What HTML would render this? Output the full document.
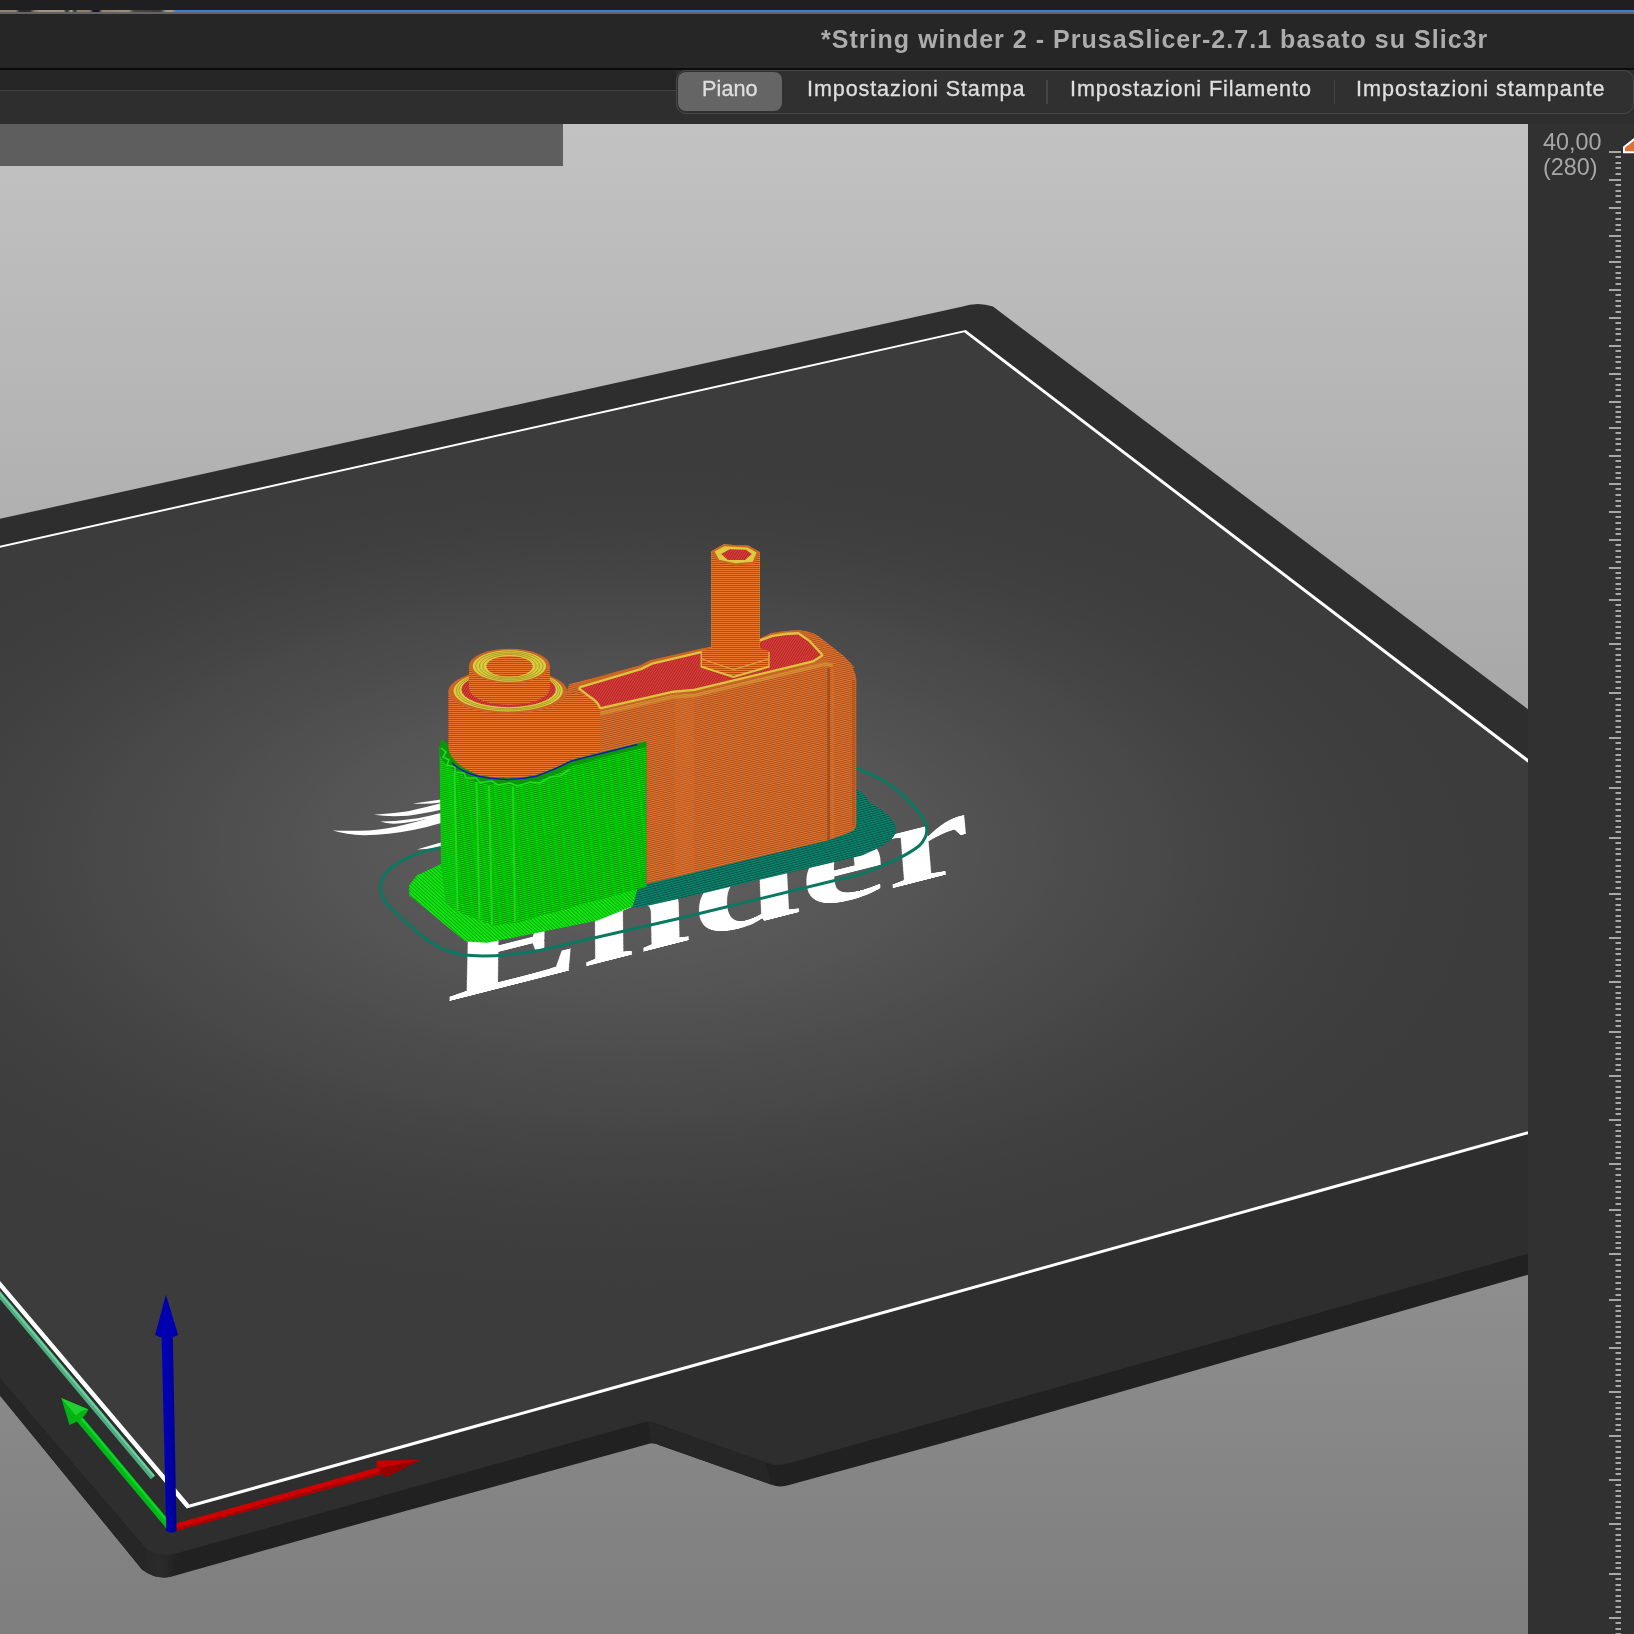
<!DOCTYPE html>
<html lang="it">
<head>
<meta charset="utf-8">
<title>String winder 2 - PrusaSlicer</title>
<style>
html,body{margin:0;padding:0;background:#262626;}
body{width:1634px;height:1634px;overflow:hidden;position:relative;font-family:"Liberation Sans",sans-serif;}
#topstrip{position:absolute;left:0;top:0;width:1634px;height:10px;background:#1f1f21;}
#blueline{position:absolute;left:175px;top:9.8px;width:1459px;height:1.9px;background:#3f7bd1;}
#tanline{position:absolute;left:0;top:9.8px;width:176px;height:1.9px;background:linear-gradient(90deg,#8f8570 0,#8f8570 9%,#2c2b28 11%,#2c2b28 17%,#7a705d 19%,#a09580 22%,#a09580 36%,#2a2a2a 38%,#b0a58c 40.5%,#2a2a2a 42.5%,#8a806a 44%,#8a806a 51%,#14142a 53%,#14142a 56%,#8f8570 58%,#9a8f78 73%,#4a463e 76%,#3e3b35 91%,#a59a82 94.5%,#a59a82 97.5%,#3f7bd1 100%);}
#grayline{position:absolute;left:0;top:11.7px;width:1634px;height:2.4px;background:#636363;}
#titlebar{position:absolute;left:0;top:14px;width:1634px;height:54px;background:#262626;}
#title{will-change:transform;position:absolute;left:821px;top:24.2px;white-space:nowrap;font-weight:bold;font-size:25px;line-height:30px;color:#acacac;letter-spacing:1.03px;}
#blackline{position:absolute;left:0;top:67.5px;width:1634px;height:2px;background:#0c0c0c;}
#tabrow{position:absolute;left:0;top:69.5px;width:1634px;height:54.5px;background:#2e2e2e;}
#tabrowtop{position:absolute;left:0;top:0;width:676px;height:20.5px;background:#262626;border-bottom:1.6px solid #414141;}
#tabs{position:absolute;left:676px;top:0px;width:958px;height:44.5px;box-sizing:border-box;border:1.5px solid #474747;border-radius:10px;background:#303030;}
#tabsel{position:absolute;left:0.8px;top:1.2px;width:104.5px;height:39px;border-radius:8px;background:#656565;}
.tab{will-change:transform;position:absolute;top:4.6px;-webkit-text-stroke:0.35px #dedede;white-space:nowrap;font-size:21.6px;line-height:28px;color:#dedede;}
.sep{position:absolute;top:9.5px;width:1.5px;height:24px;background:#454545;}
#view{position:absolute;left:0;top:124px;width:1528px;height:1510px;overflow:hidden;background:linear-gradient(180deg,#c2c2c2 0,#7e7e7e 100%);}
#graybar{position:absolute;left:0;top:0;width:563px;height:41.5px;background:#5e5e5e;}
#bedwrap{position:absolute;left:0;top:-124px;width:0;height:0;}
#bed{position:absolute;left:0;top:0;width:2500px;height:2500px;transform-origin:0 0;transform:matrix3d(0.629375336,-0.1216651697,0,3.458584042e-05,0.2725061484,0.2352803861,0,-6.752048713e-05,0,0,1,0,-525,664,0,1);
 background:radial-gradient(circle 1250px at 50% 50%,rgb(93,93,93) 0.0%,rgb(93,93,93) 5.0%,rgb(92,92,92) 10.0%,rgb(91,91,91) 15.0%,rgb(90,90,90) 20.0%,rgb(88,88,88) 25.0%,rgb(86,86,86) 30.0%,rgb(84,84,84) 35.0%,rgb(81,81,81) 40.0%,rgb(79,79,79) 45.0%,rgb(76,76,76) 50.0%,rgb(74,74,74) 55.0%,rgb(72,72,72) 60.0%,rgb(69,69,69) 65.0%,rgb(67,67,67) 70.0%,rgb(65,65,65) 75.0%,rgb(63,63,63) 80.0%,rgb(62,62,62) 85.0%,rgb(61,61,61) 90.0%,rgb(60,60,60) 95.0%,rgb(60,60,60) 100.0%);}
#bed .txt{position:absolute;left:329px;top:0;font-family:"Liberation Serif",serif;font-weight:bold;color:#fff;white-space:nowrap;transform-origin:0 0;}
svg{position:absolute;left:0;top:0;}
#side{position:absolute;left:1528px;top:124px;width:106px;height:1510px;background:#313131;}
#rlabel{will-change:transform;position:absolute;left:1542.5px;top:130.4px;font-size:23.4px;line-height:25.3px;color:#a6a6a6;white-space:nowrap;}
</style>
</head>
<body>
<div id="topstrip"></div>
<div id="tanline"></div>
<div id="blueline"></div>
<div id="grayline"></div>
<div id="titlebar"></div>
<div id="title">*String winder 2 - PrusaSlicer-2.7.1 basato su Slic3r</div>
<div id="blackline"></div>
<div id="tabrow">
  <div id="tabrowtop"></div>
  <div id="tabs">
    <div id="tabsel"></div>
    <div class="tab" id="t1" style="left:24.5px;letter-spacing:0.1px">Piano</div>
    <div class="tab" id="t2" style="left:129.5px;letter-spacing:0.88px">Impostazioni Stampa</div>
    <div class="sep" style="left:369px"></div>
    <div class="tab" id="t3" style="left:393px;letter-spacing:0.9px">Impostazioni Filamento</div>
    <div class="sep" style="left:656.5px"></div>
    <div class="tab" id="t4" style="left:679px;letter-spacing:0.98px">Impostazioni stampante</div>
  </div>
</div>

<div id="view">
  <svg id="under" width="1528" height="1510" viewBox="0 124 1528 1510">
    <defs>
  <linearGradient id="cornerg" x1="0" y1="0" x2="1" y2="0">
    <stop offset="0" stop-color="#272727"/><stop offset="0.5" stop-color="#2b2b2b"/><stop offset="1" stop-color="#212121"/>
  </linearGradient>
</defs>
<!-- side faces of the bed -->
<path d="M-10 1383 L142 1569.4 Q156 1580 171 1576.7 L380 1517.9 L650 1443.6 Q655 1442.6 659 1445 L771 1484.5 Q780 1488 789 1485 L940 1443.8 L1540 1271.3 L1540 1240 L-10 1360 Z" fill="#212121"/>
<path d="M-10 1366.5 L-10 1383.6 L142 1569.4 L147 1549.8 Z" fill="#262626"/>
<path d="M147 1549.8 L142 1569.4 Q156 1580 171 1576.7 L178 1553 Q160 1558 147 1549.8 Z" fill="url(#cornerg)"/>
<path d="M648 1421.3 L651.7 1443.3 Q655 1442.6 659 1445 L771 1484.5 L766 1462.4 Z" fill="#262626"/>
<!-- top face rim -->
<path d="M-10 521 L961.6 306.8 Q978 301.5 993 306.6 L1540 718.3 L1540 1250.2 L940 1420.5 L789 1463.2 Q779 1466.5 769 1463.4 L657 1424 Q652 1420.6 645 1422.1 L380 1496.6 L178 1553 Q160 1558 147 1549.8 L-10 1366.5 Z" fill="#2e2e2e"/>

  </svg>
  <div id="bedwrap"><div id="bed"><svg width="2500" height="2500" viewBox="0 0 1000 1000" style="position:absolute;left:0;top:0">
  <g transform="translate(329,616) skewX(-27) scale(1.04,1.0)">
    <text x="0" y="0" font-family="'Liberation Serif',serif" font-weight="bold" font-size="118" fill="#ffffff">Ender</text>
  </g>
</svg>
</div></div>
  <svg id="over" width="1528" height="1510" viewBox="0 124 1528 1510">
    <defs>
  <linearGradient id="gshaft" x1="0" y1="0" x2="1" y2="0">
    <stop offset="0" stop-color="#0000c8"/><stop offset="0.5" stop-color="#0000a8"/><stop offset="1" stop-color="#00008c"/>
  </linearGradient>
</defs>
<!-- printable area outline -->
<path d="M-527.87 663.56 L965.77 330.03 L1888.31 1033.62 L186.68 1508.50 Z M-522.12 664.44 L964.23 332.37 L1881.49 1032.58 L189.32 1504.50 Z" fill="#ffffff" fill-rule="evenodd"/>
<defs>
  <pattern id="layO" width="8" height="2" patternUnits="userSpaceOnUse" patternTransform="rotate(-13.2)">
    <rect width="8" height="2" fill="#ec7831"/><rect y="1.05" width="8" height="0.95" fill="#9e4d1b"/>
  </pattern>
  <pattern id="layO2" width="8" height="2" patternUnits="userSpaceOnUse">
    <rect width="8" height="2" fill="#ea7730"/><rect y="1" width="8" height="1" fill="#a5511d"/>
  </pattern>
  <pattern id="layG" width="8" height="2" patternUnits="userSpaceOnUse" patternTransform="rotate(-12.8)">
    <rect width="8" height="2" fill="#04ea04"/><rect y="1.05" width="8" height="0.95" fill="#038603"/>
  </pattern>
  <pattern id="layR" width="2.1" height="8" patternUnits="userSpaceOnUse" patternTransform="rotate(32)">
    <rect width="2.1" height="8" fill="#e43c39"/><rect x="1.15" width="0.95" height="8" fill="#a62a28"/>
  </pattern>
  <pattern id="layRaft" width="2.6" height="8" patternUnits="userSpaceOnUse" patternTransform="rotate(-48)">
    <rect width="2.6" height="8" fill="#12ee12"/><rect x="1.6" width="1" height="8" fill="#09a409"/>
  </pattern>
  <pattern id="layT" width="8" height="2.2" patternUnits="userSpaceOnUse" patternTransform="rotate(-14)">
    <rect width="8" height="2.2" fill="#0d8a72"/><rect y="1.2" width="8" height="1" fill="#065244"/>
  </pattern>
</defs>
<!-- dragon logo (white swooshes) -->
<g fill="#ffffff">
  <path d="M332.7 830.4 Q350 831.3 369 830.4 Q389 828.6 403.3 825 Q416 822 426.8 818.7 Q408 823 393.5 823.8 Q386 823.5 380.2 821.6 Q398 821.2 418 818.2 Q430 815.8 441 813 L441 823 Q426 827.6 413 830 Q389 834.8 364.1 835.3 Q346 834.5 332.7 830.4 Z"/>
  <path d="M373.9 814.8 Q390 814 408.1 811.3 Q428 806.6 441 803.3 L441 809.8 Q428 813 408.1 815.7 Q389 817 373.9 814.8 Z"/>
  <path d="M413 803.6 Q428 801.2 441 799.4 L441 802.6 Q428 804.4 413 803.6 Z"/>
  <path d="M417 849.6 Q430 845.5 441 842.5 L441 847.8 Q430 849 417 849.6 Z"/>
</g>
<!-- skirt loop -->
<path d="M441 847.6 Q412.5 852.5 392 867 Q379 878 380.6 890 Q382 900 392 909.5 L422 936 Q440 950.5 462 954.8 Q492 958.5 540.3 950.2 L680 918.3 L860.3 874.2 Q903 859 919.5 845.5 Q930 834.5 925.5 823.5 Q918 808 898 790.5 Q880 776.5 853 766.8" fill="none" stroke="#0b7862" stroke-width="3"/>
<!-- brim -->
<path d="M610 906 L640 878 L854 787 Q866 794.5 869.5 802.5 L877 806.8 Q890 815 896 826 Q898 836.5 885 844.2 Q875 850 862 855.6 L700 894 L640 907.6 Z" fill="url(#layT)"/>
<!-- raft under the supports -->
<path d="M409.2 885.2 L416.9 875.3 L441 864 L640 880 L632.8 906.2 L597.6 920.5 L487.4 942.8 L465.4 941.6 L409.2 895.3 Z" fill="url(#layRaft)"/>
<!-- support block -->
<path d="M439.5 746 L449 745 L646.5 741 L646.5 886.7 L517 922.5 L494 925.7 L460.5 913 L446 903.4 L441 864 Z" fill="url(#layG)"/>
<path d="M439.5 746 L449 745 L456 768 L456 910 L446 903.4 L441 864 Z" fill="#1cd41c" opacity="0.3"/>
<g stroke="#22e022" stroke-width="2" fill="none" opacity="0.8">
  <path d="M454.5 773 L457.5 910"/><path d="M476.5 782 L479.5 919"/><path d="M489 786 L492 924"/><path d="M513 787 L515 922"/>
</g>
<!-- support interface zigzag -->
<path d="M439.5 746 L441.5 739 L449 745 Q451 764 478.6 775.1 Q507 781.5 535.9 775.1 Q556 768 571.2 759.7 L637.3 743.2 L646.5 741.5 L646.5 746.5 L574 765 Q556 775.5 536 781.5 Q507 788 477 781.5 Q448 771.5 439.5 755 Z" fill="#0b960b"/>
<path d="M441 748 L446 752 L443 757 L449 760 L447 765 L455 767 L455 772 L464 773 L466 778 L476 778 L480 782.5 L492 781 L498 785 L510 783 L518 786 L530 782 L540 783 L550 777 L560 776 L570 769" fill="none" stroke="#22dc22" stroke-width="1.6"/>
<path d="M452 763 Q462 772.5 478.6 776.3 Q507 782.7 535.9 776.3 Q556 769.2 571.5 760.9 L637.3 744.4" fill="none" stroke="#1a1ab8" stroke-width="1.5"/>
<!-- main body: front face -->
<path d="M646.5 741 L646.5 884 L828.5 840.2 L840 836 Q850 832.8 853 830.6 Q856 828.5 856.3 824 L856.3 679 Q855.5 668 843.8 656.2 L818.8 636.4 Q810 630.5 796 630.2 Q783 630.5 771 633.3 L759.5 638.5 L710.6 646.8 L650.3 660.3 L639.9 665.5 L569.1 684.3 L566.5 692 L566.5 757 L571.2 759.7 L637.3 743.2 Z" fill="url(#layO)"/>
<path d="M828.6 668 L828.6 840" stroke="#7e3e14" stroke-width="2.6" opacity="0.5" fill="none"/>
<path d="M832.5 668 L832.5 838" stroke="#f08236" stroke-width="2.5" opacity="0.3" fill="none"/>
<path d="M853.5 680 L853.5 826" stroke="#8a4418" stroke-width="3" opacity="0.3" fill="none"/>
<path d="M675 696 L694 692 L694 872.5 L675 877 Z" fill="#e0742f" opacity="0.25"/>
<path d="M600.3 711.2 L673.2 694.6 L694 693.5 L824 662 L833 662.5 L833 666.5 L824 666.5 L694 697.5 L673.2 698.8 L600.3 715.4 Z" fill="#d8a238" opacity="0.55"/>
<!-- large cylinder -->
<path d="M448.4 691.5 L448.4 748 Q451 764 478.6 775.1 Q507 781.5 535.9 775.1 Q556 768 571.2 759.7 L600 752 L600 700 L567 691.5 Z" fill="url(#layO2)"/>
<ellipse cx="507.8" cy="691.5" rx="59.4" ry="22.3" fill="#c96527"/>
<ellipse cx="508.2" cy="690.8" rx="54.6" ry="20.6" fill="#dccd3c"/>
<g fill="none" stroke="#a8962a" stroke-width="0.9"><ellipse cx="508.3" cy="690.5" rx="52" ry="19.6"/><ellipse cx="508.4" cy="690.2" rx="49.6" ry="18.6"/></g>
<ellipse cx="508.6" cy="689.6" rx="47.2" ry="17.6" fill="url(#layR)"/>
<!-- arm top -->
<path d="M570.8 684.7 L639.9 665.5 L650.3 660.3 L701.3 648.6 L760 638.5 L771 633.3 Q783 630.5 796 630.2 Q810 630.5 818.8 636.4 L843.8 656.2 L852 664.5 L824 662 L694 693.5 L673.2 694.6 L600.3 711.2 Q596 701 584 694 Z" fill="#c96527"/>
<path d="M808.4 632.5 L818.8 636.4 L843.8 656.2 L855 668 L829 662.5 L821.5 654.5 L809.4 641 Z" fill="url(#layO)"/>
<path d="M580.6 688.3 L642 669.9 L652.4 664.7 L701.3 653.2 L760.6 641.4 L773 637 Q785 634.5 798 634.4 L808.4 641.6 L820.9 655.1 L812.6 660.3 L694 688.8 L673.2 690.6 L600.8 707 Q598.5 700.5 589.9 695.5 Z" fill="url(#layR)" stroke="#dcc43c" stroke-width="4.6" stroke-linejoin="round" paint-order="stroke"/>
<!-- small cylinder -->
<path d="M468.9 665.8 L468.9 688 Q470 698 490 703 Q509.4 706.5 529 703 Q549 698 549.9 688 L549.9 665.8 Z" fill="url(#layO2)"/>
<ellipse cx="509.4" cy="665.8" rx="40.5" ry="17" fill="#c96527"/>
<ellipse cx="509.4" cy="666" rx="36.7" ry="15.7" fill="#dccd3c"/>
<g fill="none" stroke="#a8962a" stroke-width="0.9"><ellipse cx="509.4" cy="666" rx="33.6" ry="14.4"/><ellipse cx="509.4" cy="666.1" rx="30" ry="13"/><ellipse cx="509.5" cy="666.2" rx="26.6" ry="11.7"/></g>
<ellipse cx="509.6" cy="666.3" rx="23.2" ry="10.4" fill="url(#layO2)"/>
<!-- tower -->
<path d="M700.6 652 L711.4 649 L711.4 551.2 L723.5 544.4 L748.3 545.7 L759.7 552.1 L759.7 649 L769.6 652 L769.6 667.6 L733.5 678 L700.6 667.6 Z" fill="#dcc43c"/>
<path d="M701.8 651 L711.4 648 L711.4 551.2 L723.5 544.4 L748.3 545.7 L759.7 552.1 L759.7 648 L768.4 651 L768.4 665.8 L733.5 676 L701.8 665.8 Z" fill="url(#layO2)"/>
<path d="M701.8 659 L733.5 669.5 L768.4 659" fill="none" stroke="#d2b23a" stroke-width="1.2" opacity="0.8"/>
<path d="M711.6 551.2 L723.5 544.4 L748.3 545.7 L759.7 552.1 L754.7 563.7 L735.5 565.4 L717.1 561.3 Z" fill="#c96527"/>
<path d="M714.6 551.6 L724.3 546.2 L747.6 547.4 L756.6 552.4 L752.7 561.8 L735.5 563.3 L719.1 559.8 Z" fill="#dccb3c"/>
<path d="M721.2 554 L729.6 549.2 L746 549.8 L751.8 554 L745 560.1 L727.8 560.1 Z" fill="url(#layR)"/>

<!-- mint line -->
<path d="M-5 1289 L153 1477.6" stroke="#4fae80" stroke-width="5.5" fill="none"/>
<path d="M-5 1287.6 L154 1476.4" stroke="#6fcfa0" stroke-width="2" fill="none"/>
<!-- Y axis (green) -->
<path d="M171.4 1529 L74 1412.5" stroke="#00b818" stroke-width="7.2" fill="none"/>
<path d="M172.8 1527.8 L75.5 1411.3" stroke="#10d428" stroke-width="2.4" fill="none"/>
<path d="M61.2 1398 L88.5 1409.5 Q84 1420 69.5 1425 Z" fill="#00b414"/>
<path d="M61.2 1398 L88.5 1409.5 Q82 1409 76 1415.5 Z" fill="#20d030"/>
<!-- X axis (red) -->
<path d="M173 1528 L381 1470.4" stroke="#cf0000" stroke-width="7.4" fill="none"/>
<path d="M173.6 1530.2 L381.6 1472.6" stroke="#a80000" stroke-width="2.6" fill="none"/>
<path d="M420 1460 L376.5 1460.6 Q375 1470 386 1477 Z" fill="#c40000"/>
<path d="M420 1460 L379 1468 Q380 1474 386 1477 Z" fill="#980000"/>
<!-- Z axis (blue) -->
<path d="M166.2 1531 Q171.3 1534.5 176.6 1531 L172.8 1336 L161.6 1336 Z" fill="url(#gshaft)"/>
<path d="M165.9 1294.7 L178.2 1335 Q166.6 1341.5 155 1335 Z" fill="#0000b0"/>

  </svg>
  <div id="graybar"></div>
</div>

<div id="side"></div>
<div id="rlabel">40,00<br>(280)</div>
<svg id="rulersvg" width="106" height="1510" viewBox="1528 124 106 1510" style="left:1528px;top:124px">
  <g fill="#a8a8a8">
<rect x="1609" y="151" width="12" height="2"/>
<rect x="1615.5" y="156" width="5.5" height="2"/>
<rect x="1615.5" y="162" width="5.5" height="2"/>
<rect x="1615.5" y="167" width="5.5" height="2"/>
<rect x="1615.5" y="173" width="5.5" height="2"/>
<rect x="1609" y="179" width="12" height="2"/>
<rect x="1615.5" y="184" width="5.5" height="2"/>
<rect x="1615.5" y="190" width="5.5" height="2"/>
<rect x="1615.5" y="195" width="5.5" height="2"/>
<rect x="1615.5" y="201" width="5.5" height="2"/>
<rect x="1609" y="207" width="12" height="2"/>
<rect x="1615.5" y="212" width="5.5" height="2"/>
<rect x="1615.5" y="218" width="5.5" height="2"/>
<rect x="1615.5" y="224" width="5.5" height="2"/>
<rect x="1615.5" y="229" width="5.5" height="2"/>
<rect x="1609" y="235" width="12" height="2"/>
<rect x="1615.5" y="240" width="5.5" height="2"/>
<rect x="1615.5" y="245" width="5.5" height="2"/>
<rect x="1615.5" y="250" width="5.5" height="2"/>
<rect x="1615.5" y="256" width="5.5" height="2"/>
<rect x="1609" y="261" width="12" height="2"/>
<rect x="1615.5" y="266" width="5.5" height="2"/>
<rect x="1615.5" y="272" width="5.5" height="2"/>
<rect x="1615.5" y="277" width="5.5" height="2"/>
<rect x="1615.5" y="283" width="5.5" height="2"/>
<rect x="1609" y="289" width="12" height="2"/>
<rect x="1615.5" y="294" width="5.5" height="2"/>
<rect x="1615.5" y="300" width="5.5" height="2"/>
<rect x="1615.5" y="305" width="5.5" height="2"/>
<rect x="1615.5" y="311" width="5.5" height="2"/>
<rect x="1609" y="317" width="12" height="2"/>
<rect x="1615.5" y="322" width="5.5" height="2"/>
<rect x="1615.5" y="328" width="5.5" height="2"/>
<rect x="1615.5" y="333" width="5.5" height="2"/>
<rect x="1615.5" y="339" width="5.5" height="2"/>
<rect x="1609" y="345" width="12" height="2"/>
<rect x="1615.5" y="350" width="5.5" height="2"/>
<rect x="1615.5" y="356" width="5.5" height="2"/>
<rect x="1615.5" y="361" width="5.5" height="2"/>
<rect x="1615.5" y="367" width="5.5" height="2"/>
<rect x="1609" y="373" width="12" height="2"/>
<rect x="1615.5" y="378" width="5.5" height="2"/>
<rect x="1615.5" y="384" width="5.5" height="2"/>
<rect x="1615.5" y="389" width="5.5" height="2"/>
<rect x="1615.5" y="395" width="5.5" height="2"/>
<rect x="1609" y="401" width="12" height="2"/>
<rect x="1615.5" y="406" width="5.5" height="2"/>
<rect x="1615.5" y="411" width="5.5" height="2"/>
<rect x="1615.5" y="416" width="5.5" height="2"/>
<rect x="1615.5" y="421" width="5.5" height="2"/>
<rect x="1609" y="427" width="12" height="2"/>
<rect x="1615.5" y="432" width="5.5" height="2"/>
<rect x="1615.5" y="438" width="5.5" height="2"/>
<rect x="1615.5" y="443" width="5.5" height="2"/>
<rect x="1615.5" y="449" width="5.5" height="2"/>
<rect x="1609" y="455" width="12" height="2"/>
<rect x="1615.5" y="460" width="5.5" height="2"/>
<rect x="1615.5" y="466" width="5.5" height="2"/>
<rect x="1615.5" y="472" width="5.5" height="2"/>
<rect x="1615.5" y="477" width="5.5" height="2"/>
<rect x="1609" y="483" width="12" height="2"/>
<rect x="1615.5" y="488" width="5.5" height="2"/>
<rect x="1615.5" y="494" width="5.5" height="2"/>
<rect x="1615.5" y="500" width="5.5" height="2"/>
<rect x="1615.5" y="505" width="5.5" height="2"/>
<rect x="1609" y="511" width="12" height="2"/>
<rect x="1615.5" y="516" width="5.5" height="2"/>
<rect x="1615.5" y="522" width="5.5" height="2"/>
<rect x="1615.5" y="528" width="5.5" height="2"/>
<rect x="1615.5" y="533" width="5.5" height="2"/>
<rect x="1609" y="539" width="12" height="2"/>
<rect x="1615.5" y="544" width="5.5" height="2"/>
<rect x="1615.5" y="550" width="5.5" height="2"/>
<rect x="1615.5" y="556" width="5.5" height="2"/>
<rect x="1615.5" y="561" width="5.5" height="2"/>
<rect x="1609" y="567" width="12" height="2"/>
<rect x="1615.5" y="572" width="5.5" height="2"/>
<rect x="1615.5" y="577" width="5.5" height="2"/>
<rect x="1615.5" y="583" width="5.5" height="2"/>
<rect x="1615.5" y="588" width="5.5" height="2"/>
<rect x="1615.5" y="593" width="5.5" height="2"/>
<rect x="1609" y="599" width="12" height="2"/>
<rect x="1615.5" y="604" width="5.5" height="2"/>
<rect x="1615.5" y="610" width="5.5" height="2"/>
<rect x="1615.5" y="615" width="5.5" height="2"/>
<rect x="1615.5" y="621" width="5.5" height="2"/>
<rect x="1615.5" y="626" width="5.5" height="2"/>
<rect x="1615.5" y="632" width="5.5" height="2"/>
<rect x="1615.5" y="637" width="5.5" height="2"/>
<rect x="1609" y="643" width="12" height="2"/>
<rect x="1615.5" y="648" width="5.5" height="2"/>
<rect x="1615.5" y="654" width="5.5" height="2"/>
<rect x="1615.5" y="659" width="5.5" height="2"/>
<rect x="1615.5" y="665" width="5.5" height="2"/>
<rect x="1615.5" y="670" width="5.5" height="2"/>
<rect x="1615.5" y="676" width="5.5" height="2"/>
<rect x="1615.5" y="681" width="5.5" height="2"/>
<rect x="1615.5" y="687" width="5.5" height="2"/>
<rect x="1609" y="692" width="12" height="2"/>
<rect x="1615.5" y="698" width="5.5" height="2"/>
<rect x="1615.5" y="704" width="5.5" height="2"/>
<rect x="1615.5" y="709" width="5.5" height="2"/>
<rect x="1615.5" y="715" width="5.5" height="2"/>
<rect x="1615.5" y="720" width="5.5" height="2"/>
<rect x="1615.5" y="726" width="5.5" height="2"/>
<rect x="1615.5" y="731" width="5.5" height="2"/>
<rect x="1609" y="737" width="12" height="2"/>
<rect x="1615.5" y="742" width="5.5" height="2"/>
<rect x="1615.5" y="748" width="5.5" height="2"/>
<rect x="1615.5" y="754" width="5.5" height="2"/>
<rect x="1615.5" y="759" width="5.5" height="2"/>
<rect x="1615.5" y="765" width="5.5" height="2"/>
<rect x="1615.5" y="770" width="5.5" height="2"/>
<rect x="1615.5" y="776" width="5.5" height="2"/>
<rect x="1615.5" y="781" width="5.5" height="2"/>
<rect x="1609" y="787" width="12" height="2"/>
<rect x="1615.5" y="792" width="5.5" height="2"/>
<rect x="1615.5" y="798" width="5.5" height="2"/>
<rect x="1615.5" y="803" width="5.5" height="2"/>
<rect x="1615.5" y="809" width="5.5" height="2"/>
<rect x="1615.5" y="815" width="5.5" height="2"/>
<rect x="1615.5" y="820" width="5.5" height="2"/>
<rect x="1615.5" y="826" width="5.5" height="2"/>
<rect x="1615.5" y="831" width="5.5" height="2"/>
<rect x="1609" y="837" width="12" height="2"/>
<rect x="1615.5" y="842" width="5.5" height="2"/>
<rect x="1615.5" y="848" width="5.5" height="2"/>
<rect x="1615.5" y="853" width="5.5" height="2"/>
<rect x="1615.5" y="859" width="5.5" height="2"/>
<rect x="1615.5" y="865" width="5.5" height="2"/>
<rect x="1615.5" y="870" width="5.5" height="2"/>
<rect x="1615.5" y="876" width="5.5" height="2"/>
<rect x="1615.5" y="881" width="5.5" height="2"/>
<rect x="1615.5" y="887" width="5.5" height="2"/>
<rect x="1609" y="893" width="12" height="2"/>
<rect x="1615.5" y="898" width="5.5" height="2"/>
<rect x="1615.5" y="904" width="5.5" height="2"/>
<rect x="1615.5" y="909" width="5.5" height="2"/>
<rect x="1615.5" y="915" width="5.5" height="2"/>
<rect x="1615.5" y="920" width="5.5" height="2"/>
<rect x="1615.5" y="926" width="5.5" height="2"/>
<rect x="1615.5" y="931" width="5.5" height="2"/>
<rect x="1609" y="937" width="12" height="2"/>
<rect x="1615.5" y="942" width="5.5" height="2"/>
<rect x="1615.5" y="948" width="5.5" height="2"/>
<rect x="1615.5" y="953" width="5.5" height="2"/>
<rect x="1615.5" y="959" width="5.5" height="2"/>
<rect x="1615.5" y="964" width="5.5" height="2"/>
<rect x="1615.5" y="970" width="5.5" height="2"/>
<rect x="1615.5" y="975" width="5.5" height="2"/>
<rect x="1609" y="981" width="12" height="2"/>
<rect x="1615.5" y="986" width="5.5" height="2"/>
<rect x="1615.5" y="992" width="5.5" height="2"/>
<rect x="1615.5" y="997" width="5.5" height="2"/>
<rect x="1615.5" y="1003" width="5.5" height="2"/>
<rect x="1615.5" y="1008" width="5.5" height="2"/>
<rect x="1615.5" y="1014" width="5.5" height="2"/>
<rect x="1615.5" y="1020" width="5.5" height="2"/>
<rect x="1615.5" y="1025" width="5.5" height="2"/>
<rect x="1609" y="1031" width="12" height="2"/>
<rect x="1615.5" y="1036" width="5.5" height="2"/>
<rect x="1615.5" y="1042" width="5.5" height="2"/>
<rect x="1615.5" y="1047" width="5.5" height="2"/>
<rect x="1615.5" y="1053" width="5.5" height="2"/>
<rect x="1615.5" y="1058" width="5.5" height="2"/>
<rect x="1615.5" y="1064" width="5.5" height="2"/>
<rect x="1615.5" y="1069" width="5.5" height="2"/>
<rect x="1609" y="1075" width="12" height="2"/>
<rect x="1615.5" y="1080" width="5.5" height="2"/>
<rect x="1615.5" y="1086" width="5.5" height="2"/>
<rect x="1615.5" y="1091" width="5.5" height="2"/>
<rect x="1615.5" y="1097" width="5.5" height="2"/>
<rect x="1615.5" y="1102" width="5.5" height="2"/>
<rect x="1615.5" y="1108" width="5.5" height="2"/>
<rect x="1615.5" y="1113" width="5.5" height="2"/>
<rect x="1609" y="1119" width="12" height="2"/>
<rect x="1615.5" y="1124" width="5.5" height="2"/>
<rect x="1615.5" y="1130" width="5.5" height="2"/>
<rect x="1615.5" y="1135" width="5.5" height="2"/>
<rect x="1615.5" y="1141" width="5.5" height="2"/>
<rect x="1615.5" y="1146" width="5.5" height="2"/>
<rect x="1615.5" y="1152" width="5.5" height="2"/>
<rect x="1615.5" y="1157" width="5.5" height="2"/>
<rect x="1609" y="1163" width="12" height="2"/>
<rect x="1615.5" y="1168" width="5.5" height="2"/>
<rect x="1615.5" y="1174" width="5.5" height="2"/>
<rect x="1615.5" y="1180" width="5.5" height="2"/>
<rect x="1615.5" y="1186" width="5.5" height="2"/>
<rect x="1615.5" y="1191" width="5.5" height="2"/>
<rect x="1615.5" y="1197" width="5.5" height="2"/>
<rect x="1615.5" y="1203" width="5.5" height="2"/>
<rect x="1609" y="1209" width="12" height="2"/>
<rect x="1615.5" y="1214" width="5.5" height="2"/>
<rect x="1615.5" y="1220" width="5.5" height="2"/>
<rect x="1615.5" y="1225" width="5.5" height="2"/>
<rect x="1615.5" y="1231" width="5.5" height="2"/>
<rect x="1615.5" y="1236" width="5.5" height="2"/>
<rect x="1615.5" y="1242" width="5.5" height="2"/>
<rect x="1615.5" y="1247" width="5.5" height="2"/>
<rect x="1609" y="1253" width="12" height="2"/>
<rect x="1615.5" y="1259" width="5.5" height="2"/>
<rect x="1615.5" y="1264" width="5.5" height="2"/>
<rect x="1615.5" y="1270" width="5.5" height="2"/>
<rect x="1615.5" y="1276" width="5.5" height="2"/>
<rect x="1615.5" y="1282" width="5.5" height="2"/>
<rect x="1615.5" y="1288" width="5.5" height="2"/>
<rect x="1615.5" y="1294" width="5.5" height="2"/>
<rect x="1609" y="1299" width="12" height="2"/>
<rect x="1615.5" y="1305" width="5.5" height="2"/>
<rect x="1615.5" y="1310" width="5.5" height="2"/>
<rect x="1615.5" y="1315" width="5.5" height="2"/>
<rect x="1615.5" y="1321" width="5.5" height="2"/>
<rect x="1615.5" y="1326" width="5.5" height="2"/>
<rect x="1615.5" y="1331" width="5.5" height="2"/>
<rect x="1615.5" y="1336" width="5.5" height="2"/>
<rect x="1615.5" y="1342" width="5.5" height="2"/>
<rect x="1609" y="1347" width="12" height="2"/>
<rect x="1615.5" y="1352" width="5.5" height="2"/>
<rect x="1615.5" y="1358" width="5.5" height="2"/>
<rect x="1615.5" y="1363" width="5.5" height="2"/>
<rect x="1615.5" y="1369" width="5.5" height="2"/>
<rect x="1615.5" y="1374" width="5.5" height="2"/>
<rect x="1615.5" y="1380" width="5.5" height="2"/>
<rect x="1615.5" y="1385" width="5.5" height="2"/>
<rect x="1609" y="1391" width="12" height="2"/>
<rect x="1615.5" y="1396" width="5.5" height="2"/>
<rect x="1615.5" y="1402" width="5.5" height="2"/>
<rect x="1615.5" y="1407" width="5.5" height="2"/>
<rect x="1615.5" y="1413" width="5.5" height="2"/>
<rect x="1615.5" y="1418" width="5.5" height="2"/>
<rect x="1615.5" y="1424" width="5.5" height="2"/>
<rect x="1615.5" y="1429" width="5.5" height="2"/>
<rect x="1609" y="1435" width="12" height="2"/>
<rect x="1615.5" y="1440" width="5.5" height="2"/>
<rect x="1615.5" y="1446" width="5.5" height="2"/>
<rect x="1615.5" y="1451" width="5.5" height="2"/>
<rect x="1615.5" y="1457" width="5.5" height="2"/>
<rect x="1615.5" y="1462" width="5.5" height="2"/>
<rect x="1615.5" y="1468" width="5.5" height="2"/>
<rect x="1615.5" y="1473" width="5.5" height="2"/>
<rect x="1609" y="1479" width="12" height="2"/>
<rect x="1615.5" y="1484" width="5.5" height="2"/>
<rect x="1615.5" y="1490" width="5.5" height="2"/>
<rect x="1615.5" y="1495" width="5.5" height="2"/>
<rect x="1615.5" y="1501" width="5.5" height="2"/>
<rect x="1615.5" y="1506" width="5.5" height="2"/>
<rect x="1615.5" y="1512" width="5.5" height="2"/>
<rect x="1615.5" y="1517" width="5.5" height="2"/>
<rect x="1609" y="1523" width="12" height="2"/>
<rect x="1615.5" y="1528" width="5.5" height="2"/>
<rect x="1615.5" y="1534" width="5.5" height="2"/>
<rect x="1615.5" y="1539" width="5.5" height="2"/>
<rect x="1615.5" y="1545" width="5.5" height="2"/>
<rect x="1615.5" y="1550" width="5.5" height="2"/>
<rect x="1615.5" y="1556" width="5.5" height="2"/>
<rect x="1615.5" y="1562" width="5.5" height="2"/>
<rect x="1615.5" y="1567" width="5.5" height="2"/>
<rect x="1609" y="1573" width="12" height="2"/>
<rect x="1615.5" y="1578" width="5.5" height="2"/>
<rect x="1615.5" y="1584" width="5.5" height="2"/>
<rect x="1615.5" y="1589" width="5.5" height="2"/>
<rect x="1615.5" y="1595" width="5.5" height="2"/>
<rect x="1615.5" y="1600" width="5.5" height="2"/>
<rect x="1615.5" y="1606" width="5.5" height="2"/>
<rect x="1615.5" y="1611" width="5.5" height="2"/>
<rect x="1609" y="1617" width="12" height="2"/>
<rect x="1615.5" y="1622" width="5.5" height="2"/>
<rect x="1615.5" y="1628" width="5.5" height="2"/>
<rect x="1615.5" y="1633" width="5.5" height="2"/>
<rect x="1615.5" y="1639" width="5.5" height="2"/>
<rect x="1615.5" y="1644" width="5.5" height="2"/>
<rect x="1615.5" y="1650" width="5.5" height="2"/>
<rect x="1615.5" y="1655" width="5.5" height="2"/>
  </g>
  <path d="M1624 152.3 L1624 147.3 L1635 138.6 L1635 152.3 Z" fill="#e0703a" stroke="#ffffff" stroke-width="2"/>
</svg>
</body>
</html>
